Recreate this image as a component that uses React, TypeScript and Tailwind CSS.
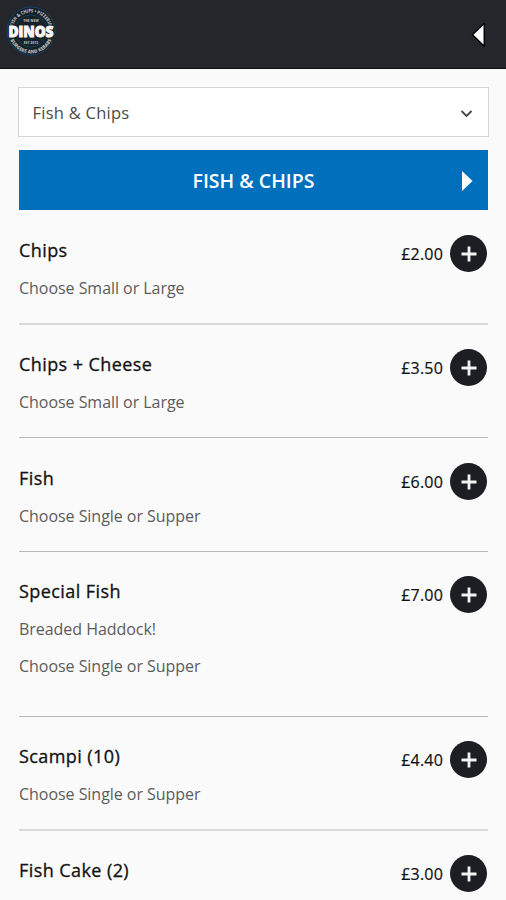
type Item = {
  name: string;
  notes: string[];
  price: string;
  box: string;
};

const items: Item[] = [
  { name: "Chips", notes: ["Choose Small or Large"], price: "£2.00", box: "h-[115px] border-b-2 border-[#dadada] pt-[25px]" },
  { name: "Chips + Cheese", notes: ["Choose Small or Large"], price: "£3.50", box: "h-[113px] border-b border-[#b8b8b8] pt-[24px]" },
  { name: "Fish", notes: ["Choose Single or Supper"], price: "£6.00", box: "h-[114px] border-b border-[#b8b8b8] pt-[25px]" },
  { name: "Special Fish", notes: ["Breaded Haddock!", "Choose Single or Supper"], price: "£7.00", box: "h-[165px] border-b border-[#b8b8b8] pt-[24px]" },
  { name: "Scampi (10)", notes: ["Choose Single or Supper"], price: "£4.40", box: "h-[114px] border-b-2 border-[#dadada] pt-[24px]" },
  { name: "Fish Cake (2)", notes: [], price: "£3.00", box: "h-[69px] pt-[24px]" },
];

function Logo() {
  return (
    <svg width="52" height="52" viewBox="0 0 52 52" className="mt-[5px] ml-[5px] shrink-0">
      <defs>
        <path id="upper" d="M7.5 26 A18.5 18.5 0 0 1 44.5 26" />
        <path id="lower" d="M3.5 26 A22.5 22.5 0 0 0 48.5 26" />
      </defs>
      <circle cx="26" cy="26" r="24" fill="#17212a" stroke="#14435f" strokeWidth="1" />
      <circle cx="26" cy="26" r="16" fill="none" stroke="#1b4459" strokeWidth=".8" />
      <g fill="#b0b2b3" fontFamily="'Open Sans', sans-serif" fontWeight="800" fontSize="5">
        <text textAnchor="middle" textLength="48" lengthAdjust="spacingAndGlyphs"><textPath href="#upper" startOffset="50%" textLength="48" lengthAdjust="spacingAndGlyphs">FISH &amp; CHIPS • PIZZERIA</textPath></text>
        <text textAnchor="middle" textLength="52" lengthAdjust="spacingAndGlyphs"><textPath href="#lower" startOffset="50%" textLength="52" lengthAdjust="spacingAndGlyphs">BURGERS AND KEBABS</textPath></text>
        <text x="26" y="16.5" textAnchor="middle" fontSize="3.4">THE NEW</text>
        <text x="26" y="38.5" textAnchor="middle" fontSize="3.4">EST 2013</text>
      </g>
      <rect x="3" y="19.5" width="46" height="14" fill="#17212a" />
      <text x="26" y="31.5" textAnchor="middle" fill="#f8f8f8" stroke="#f8f8f8" strokeWidth="1" fontFamily="'Open Sans', sans-serif" fontWeight="800" fontSize="15" textLength="45" lengthAdjust="spacingAndGlyphs">DINOS</text>
    </svg>
  );
}

function AddButton() {
  return (
    <button aria-label="Add" className="flex size-[37px] items-center justify-center rounded-full bg-[#1c1e24]">
      <svg width="16" height="16" viewBox="0 0 16 16" stroke="#f2f2f2" strokeWidth="2.8">
        <path d="M8 .5V15.5M.5 8H15.5" />
      </svg>
    </button>
  );
}

export default function App() {
  return (
    <div className="h-[900px] w-[506px] overflow-hidden bg-[#fafafa] font-['Open_Sans',sans-serif]">
      <header className="flex h-[69px] justify-between border-b border-[#101115] bg-[#24262b]">
        <Logo />
        <svg width="18" height="24" viewBox="0 0 18 24" className="mt-[23px] mr-[17px]">
          <path d="M12.5 2V21.5L2.5 11.8Z" fill="#fff" stroke="#07080b" strokeWidth="3" paintOrder="stroke" />
        </svg>
      </header>
      <main className="px-[18px]">
        <div className="mt-[18px] mr-[-1px] flex h-[50px] items-center justify-between border-[1.5px] border-[#d5d5d5] bg-white pr-[15px] pl-[13.5px] text-[16.5px] text-[#4a4a4a]">
          <span className="pt-0.5 tracking-[0.25px]">Fish &amp; Chips</span>
          <svg width="13" height="9" viewBox="0 0 13 9" fill="none" stroke="#444" strokeWidth="1.8" className="mt-[2px]">
            <path d="M1.5 2L6.5 7L11.5 2" />
          </svg>
        </div>
        <div className="mt-[13px] ml-px grid h-[60px] grid-cols-[1fr_auto_1fr] items-center bg-[#0070bd] text-white">
          <span />
          <h1 className="pt-[2px] text-[19.5px] font-semibold">FISH &amp; CHIPS</h1>
          <svg width="12" height="20" viewBox="0 0 12 20" className="mt-px mr-[15px] justify-self-end">
            <path d="M1 0V20L11.5 10Z" fill="#fff" />
          </svg>
        </div>
        <div className="ml-px">
          {items.map((item) => (
            <article key={item.name} className={`flex justify-between ${item.box}`}>
              <div>
                <h2 className="mb-[8px] h-[30px] text-[18px] leading-[30px] tracking-[0.42px] text-[#111] [-webkit-text-stroke:0.3px_#111]">{item.name}</h2>
                {item.notes.map((note) => (
                  <p key={note} className="mb-[7px] h-[30px] text-[16px] leading-[30px] tracking-[-0.04px] text-[#5c5c5c]">{note}</p>
                ))}
              </div>
              <div className="flex h-[37px] items-center gap-[7px] pr-px">
                <span className="text-[16px] tracking-[0.2px] text-[#111] [-webkit-text-stroke:0.2px_#111]">{item.price}</span>
                <AddButton />
              </div>
            </article>
          ))}
        </div>
      </main>
    </div>
  );
}
